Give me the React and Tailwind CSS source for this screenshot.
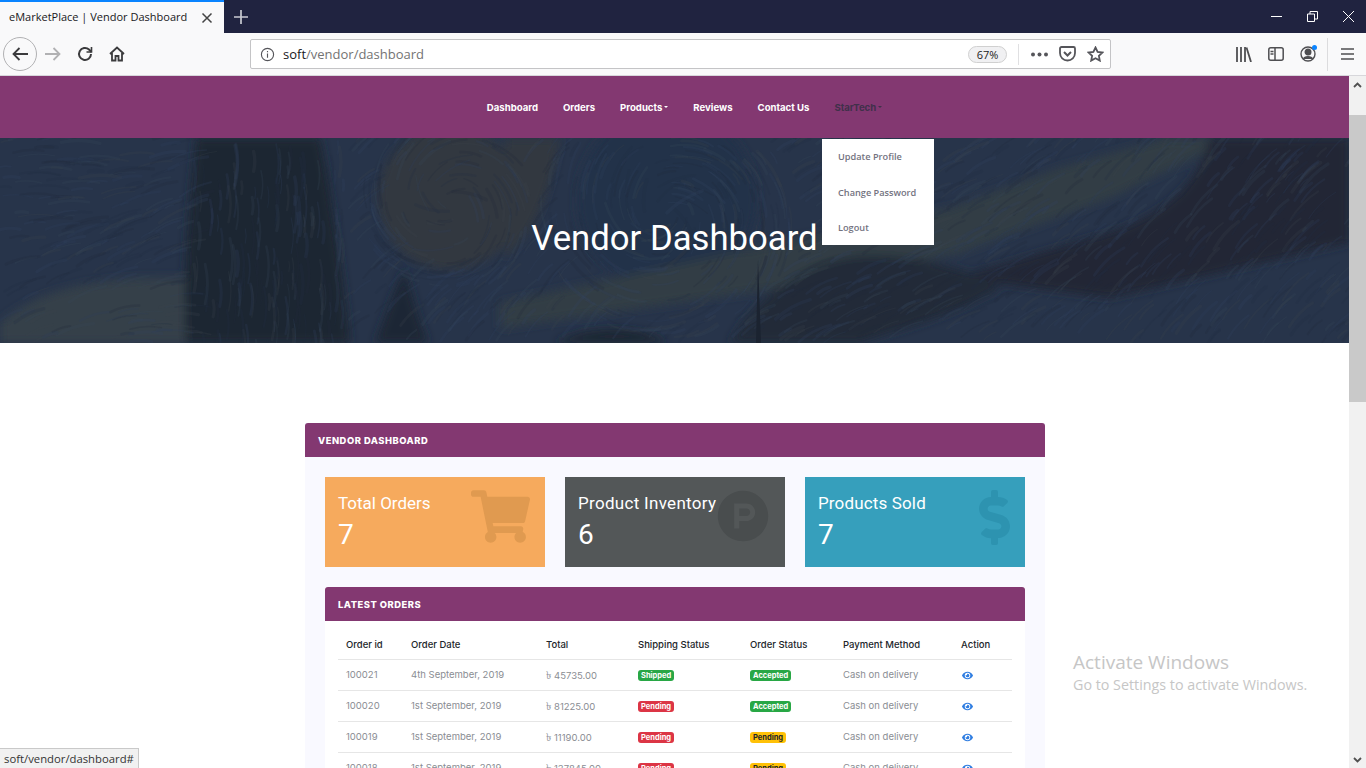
import { FaEye, FaShoppingCart, FaProductHunt, FaDollarSign } from 'react-icons/fa';

/** Vendor dashboard page inside a Firefox window, as in the screenshot. */

const orders = [
  { id: '100021', date: '4th September, 2019', total: '45735.00', ship: 'Shipped', status: 'Accepted' },
  { id: '100020', date: '1st September, 2019', total: '81225.00', ship: 'Pending', status: 'Accepted' },
  { id: '100019', date: '1st September, 2019', total: '11190.00', ship: 'Pending', status: 'Pending' },
  { id: '100018', date: '1st September, 2019', total: '137845.00', ship: 'Pending', status: 'Pending' },
];

// which way the paint runs at a point of the hero
function strokeAngle(x, y) {
  const swirl = (cx, cy, radius) => {
    const dist = Math.hypot(x - cx, y - cy);
    return dist < radius ? Math.atan2(y - cy, x - cx) + Math.PI / 2 : null;
  };
  const around = swirl(450, 65, 85) ?? swirl(667, 75, 125);
  if (around !== null) return around;
  if (x >= 190 && x < 345) return Math.PI / 2;
  if (x < 190) return -0.2 + Math.sin(x / 60 + y / 40) * 0.25;
  return -0.65 + Math.sin(x / 110) * 0.2;
}

// brush strokes for the painting behind the hero
function makeStrokes() {
  const colours = ['#31435f', '#212d42', '#364559', '#3a444b', '#202a3a', '#2d3d5a'];
  const out = [];
  let seed = 11;
  const rnd = () => {
    seed = (seed * 16807) % 2147483647;
    return seed / 2147483647;
  };
  for (let i = 0; i < 1500; i++) {
    const x = rnd() * 1349;
    const y = rnd() * 205;
    const len = 10 + rnd() * 32;
    const a = strokeAngle(x, y);
    const dx = Math.cos(a) * len;
    const dy = Math.sin(a) * len;
    out.push({
      d: `M${x.toFixed(1)} ${y.toFixed(1)}q${(dx / 2 + dy * 0.12).toFixed(1)} ${(dy / 2 - dx * 0.12).toFixed(1)} ${dx.toFixed(1)} ${dy.toFixed(1)}`,
      c: colours[Math.floor(rnd() * colours.length)],
      w: 1 + rnd() * 2.5,
    });
  }
  return out;
}

const strokes = makeStrokes();

function HeroPainting() {
  return (
    <svg className="absolute inset-0 w-full h-full" viewBox="0 0 1349 205" preserveAspectRatio="none">
      <defs>
        <filter id="soft" x="-10%" y="-10%" width="120%" height="120%">
          <feGaussianBlur stdDeviation="5" />
        </filter>
      </defs>
      <rect width="1349" height="205" fill="#27344a" />
      <g filter="url(#soft)">
        {/* greenish patch bottom left */}
        <path d="M0 205V185C40 150 100 138 185 140L190 205Z" fill="#353f48" />
        {/* moon */}
        <circle cx="450" cy="60" r="72" fill="#33383f" />
        <path d="M505 0H560C550 50 540 90 505 120Z" fill="#33383f" />
        {/* cypress trees */}
        <path d="M196 0H320C332 60 342 130 350 205H186C182 130 190 60 196 0Z" fill="#1e2632" />
        <path d="M375 205C385 180 395 150 405 130C412 160 420 185 428 205Z" fill="#1f2734" />
        {/* swirl */}
        <circle cx="667" cy="62" r="90" fill="#24314a" />
        {/* pale band rising to the right */}
        <path d="M500 165L778 105L950 70L1060 30L1167 0H1235L1110 60L960 115L780 150L500 190Z" fill="#333c44" />
        {/* dark hill and rocks */}
        <path d="M1210 0H1349V105L1110 160L955 140L1090 100C1170 80 1200 40 1210 0Z" fill="#202836" />
        <path d="M730 205C760 150 820 115 880 118C930 120 980 135 1000 150C950 180 900 190 860 205Z" fill="#202938" />
        <path d="M555 205C580 190 640 185 667 205Z" fill="#1e2633" />
      </g>
      {strokes.map((s, i) => (
        <path key={i} d={s.d} stroke={s.c} strokeWidth={s.w} fill="none" opacity="0.24" strokeLinecap="round" />
      ))}
      <path d="M758 122L756 205H761Z" fill="#1b2330" />
    </svg>
  );
}

function Badge({ label, warn }) {
  let colour = 'bg-[#28a745] text-white';
  if (label === 'Pending') colour = warn ? 'bg-[#ffc107] text-[#212529]' : 'bg-[#dc3545] text-white';
  return (
    <span className={`inline-block px-[3px] rounded-[3px] text-[7.5px] leading-[11px] font-bold ${colour}`}>
      {label}
    </span>
  );
}

function StatCard({ title, value, bg, icon, titleClass }) {
  return (
    <div className={`relative w-[220px] h-[90px] px-[13px] pt-[14px] text-white ${bg}`}>
      <div className="absolute right-[15px] top-[13px]">{icon}</div>
      <div className={`relative text-[17px] leading-[24px] ${titleClass}`}>{title}</div>
      <div className="relative text-[28px] leading-[38px] mt-[1px]">{value}</div>
    </div>
  );
}

function OrdersTable() {
  return (
    <table className="w-[674px] mx-[13px] table-fixed text-[9.5px] text-[#8a8d93]">
      <thead>
        <tr className="h-[38px] border-b border-[#e6e6e6] text-[#212529] text-left">
          <th className="w-[65px] pl-2 pt-[10px] font-medium">Order id</th>
          <th className="w-[135px] pl-2 pt-[10px] font-medium">Order Date</th>
          <th className="w-[92px] pl-2 pt-[10px] font-medium">Total</th>
          <th className="w-[112px] pl-2 pt-[10px] font-medium">Shipping Status</th>
          <th className="w-[93px] pl-2 pt-[10px] font-medium">Order Status</th>
          <th className="w-[118px] pl-2 pt-[10px] font-medium">Payment Method</th>
          <th className="w-[59px] pl-2 pt-[10px] font-medium">Action</th>
        </tr>
      </thead>
      <tbody>
        {orders.map((o) => (
          <tr key={o.id} className="h-[31px] border-b border-[#e6e6e6]">
            <td className="pl-2 pt-[2px]">{o.id}</td>
            <td className="pl-2 pt-[2px]">{o.date}</td>
            <td className="pl-2 pt-[2px]"><span className="text-[11px] mr-[3px]">৳</span>{o.total}</td>
            <td className="pl-2 pt-[2px]"><Badge label={o.ship} /></td>
            <td className="pl-2 pt-[2px]"><Badge label={o.status} warn /></td>
            <td className="pl-2 pt-[2px]">Cash on delivery</td>
            <td className="pl-2 pt-[2px]"><FaEye size={11} className="ml-[1px] text-[#2f7de1]" /></td>
          </tr>
        ))}
      </tbody>
    </table>
  );
}

function BrowserChrome() {
  return (
    <div className="shrink-0" style={{ fontFamily: '"Open Sans", sans-serif' }}>
      {/* tab strip */}
      <div className="h-[33px] bg-[#202340] flex items-stretch">
        <div className="w-[224px] bg-[#f9f9fa] border-t-2 border-[#0a84ff] flex items-center pl-[9px] pr-[11px] justify-between">
          <span className="text-[11px] text-[#18181a] whitespace-nowrap">eMarketPlace | Vendor Dashboard</span>
          <svg width="12" height="12" viewBox="0 0 12 12" stroke="#444" strokeWidth="1.5"><path d="M1.5 1.5l9 9M10.5 1.5l-9 9" /></svg>
        </div>
        <div className="w-[34px] flex items-center justify-center">
          <svg width="14" height="14" viewBox="0 0 14 14" stroke="#c9cad2" strokeWidth="1.7"><path d="M7 0v14M0 7h14" /></svg>
        </div>
        <div className="flex-1" />
        <div className="flex items-center gap-[25px] pr-[12px]">
          <svg width="11" height="11" viewBox="0 0 11 11" stroke="#fff" strokeWidth="1"><path d="M0 5.5h11" /></svg>
          <svg width="11" height="11" viewBox="0 0 11 11" stroke="#fff" strokeWidth="1" fill="none"><path d="M.5 3h7v7.500h-7zM3 3V.5h7.500V8H8" /></svg>
          <svg width="11" height="11" viewBox="0 0 11 11" stroke="#fff" strokeWidth="1"><path d="M0 0l11 11M11 0L0 11" /></svg>
        </div>
      </div>
      {/* toolbar */}
      <div className="h-[43px] bg-[#f9f9fa] border-b border-[#d7d7db] flex items-center">
        <div className="w-[250px] flex items-center pl-[3px]">
          <div className="w-[34px] h-[34px] rounded-full border border-[#b1b1b3] flex items-center justify-center">
            <svg width="16" height="14" viewBox="0 0 16 14" fill="none" stroke="#3b3b3d" strokeWidth="1.8"><path d="M16 7H1.500M7.500 1L1.500 7l6 6" /></svg>
          </div>
          <svg className="ml-[8px]" width="16" height="14" viewBox="0 0 16 14" fill="none" stroke="#b1b1b3" strokeWidth="1.8"><path d="M0 7h14.500M8.500 1l6 6-6 6" /></svg>
          <svg className="ml-[16px]" width="16" height="16" viewBox="0 0 16 16" fill="none" stroke="#3b3b3d" strokeWidth="2"><path d="M14 8a6 6 0 1 1-2-4.500L14.500 6" /><path d="M14.500 1v5h-5" strokeWidth="1.6" /></svg>
          <svg className="ml-[16px]" width="16" height="16" viewBox="0 0 16 16" fill="none" stroke="#3b3b3d" strokeWidth="1.8"><path d="M1 8l7-6.500L15 8M3 7v7.500h3.500V10h3v4.500H13V7" /></svg>
        </div>
        <div className="w-[861px] h-[30px] bg-white border border-[#c4c4c6] rounded-[2px] flex items-center pl-[9px] pr-[6px]">
          <svg width="15" height="15" viewBox="0 0 16 16" fill="none" stroke="#55555a" strokeWidth="1.2"><circle cx="8" cy="8" r="6.5" /><path d="M8 7v4.500M8 4.300v1.300" /></svg>
          <span className="ml-[8px] mt-[1px] text-[13px] text-[#737373]"><span className="text-[#18181a]">soft</span>/vendor/dashboard</span>
          <div className="flex-1" />
          <span className="w-[39px] h-[17px] rounded-full border border-[#d0d0d0] bg-[#f0f0f2] text-[11px] leading-[15px] text-center text-[#222] mr-[11px]">67%</span>
          <div className="w-px h-[21px] bg-[#e0e0e2] mr-[12px]" />
          <svg width="17" height="5" viewBox="0 0 17 5" fill="#55555a"><circle cx="2" cy="2.5" r="2" /><circle cx="8.5" cy="2.5" r="2" /><circle cx="15" cy="2.5" r="2" /></svg>
          <svg className="ml-[11px]" width="17" height="16" viewBox="0 0 17 16" fill="none" stroke="#55555a" strokeWidth="1.8"><path d="M1 2.500A1.500 1.500 0 0 1 2.500 1h12A1.500 1.500 0 0 1 16 2.500V7A7.500 7.500 0 0 1 1 7Z" /><path d="M5 6l3.500 3.500L12 6" strokeWidth="2" /></svg>
          <svg className="ml-[11px]" width="17" height="16" viewBox="0 0 17 16" fill="none" stroke="#55555a" strokeWidth="1.8"><path d="M8.500 1.500l2.100 4.400 4.900.6-3.600 3.300.9 4.800-4.300-2.400-4.300 2.400.9-4.800-3.600-3.300 4.900-.6Z" /></svg>
        </div>
        <div className="flex-1 flex items-center pl-[125px]">
          <svg width="16" height="15" viewBox="0 0 16 15" fill="none" stroke="#4f4f52" strokeWidth="1.8"><path d="M1 0v15M5 0v15M9 0v15M10.500 .5L15 15" /></svg>
          <svg className="ml-[16px]" width="16" height="14" viewBox="0 0 16 14" fill="none" stroke="#4f4f52" strokeWidth="1.5"><rect x=".8" y=".8" width="14.4" height="12.4" rx="2" /><path d="M7 1v12M2.500 4.500h3M2.500 7h3" /></svg>
          <div className="ml-[16px] relative w-[16px] h-[16px]">
            <svg width="16" height="16" viewBox="0 0 16 16" fill="none" stroke="#4f4f52" strokeWidth="1.4"><circle cx="8" cy="8" r="7" /><circle cx="8" cy="6" r="2.8" fill="#4f4f52" /><path d="M3.500 13c1-3 8-3 9 0" fill="#4f4f52" /></svg>
            <span className="absolute -top-[1px] -right-[1px] w-[5px] h-[5px] rounded-full bg-[#0a84ff]" />
          </div>
          <div className="w-px h-[33px] bg-[#dcdcde] ml-[11px]" />
          <svg className="ml-[13px]" width="13" height="12" viewBox="0 0 13 12" stroke="#4f4f52" strokeWidth="1.7"><path d="M0 1h13M0 6h13M0 11h13" /></svg>
        </div>
      </div>
    </div>
  );
}

function Caret({ colour }) {
  return <span className={`inline-block ml-[2px] mb-[3px] w-0 h-0 border-x-[2px] border-x-transparent border-t-[2px] ${colour}`} />;
}

function NavBar() {
  const links = ['Dashboard', 'Orders', 'Products', 'Reviews', 'Contact Us'];
  return (
    <nav className="relative h-[62px] bg-[#833871] flex justify-center pt-[25px] pl-[20px]">
      <div className="flex gap-[25px] text-[9.6px] leading-[13px] font-bold text-white">
        {links.map((l) => (
          <span key={l}>
            {l}
            {l === 'Products' && <Caret colour="border-t-white" />}
          </span>
        ))}
        <span className="text-[#40304a]">
          StarTech
          <Caret colour="border-t-[#40304a]" />
        </span>
      </div>
      {/* account dropdown, open */}
      <div
        className="absolute left-[822px] top-[63px] z-10 w-[112px] h-[106px] bg-white pl-[16px] pt-[11px] text-[9.2px] font-semibold text-[#73737f] flex flex-col gap-[21.5px] leading-[14px]"
        style={{ fontFamily: '"Open Sans", sans-serif' }}
      >
        <span>Update Profile</span>
        <span>Change Password</span>
        <span>Logout</span>
      </div>
    </nav>
  );
}

function Scrollbar() {
  return (
    <div className="w-[17px] shrink-0 bg-[#f1f1f1] flex flex-col items-center">
      <div className="h-[17px] flex items-center justify-center">
        <svg width="9" height="6" viewBox="0 0 9 6" fill="none" stroke="#505050" strokeWidth="1.8"><path d="M1 5l3.500-3.500L8 5" /></svg>
      </div>
      <div className="w-full h-[287px] mt-[22px] bg-[#c9c9c9]" />
      <div className="flex-1" />
      <div className="h-[17px] flex items-center justify-center">
        <svg width="9" height="6" viewBox="0 0 9 6" fill="none" stroke="#505050" strokeWidth="1.8"><path d="M1 1l3.500 3.500L8 1" /></svg>
      </div>
    </div>
  );
}

export default function App() {
  return (
    <div className="relative h-screen w-full overflow-hidden flex flex-col bg-white">
      <BrowserChrome />

      <div className="flex-1 min-h-0 flex">
        <main className="flex-1 min-w-0 overflow-hidden" style={{ fontFamily: 'Inter, Roboto, sans-serif' }}>
          <NavBar />

          <section className="relative h-[205px] flex items-center justify-center pb-[5px] overflow-hidden">
            <HeroPainting />
            <h1 className="relative text-[34.7px] text-white" style={{ fontFamily: 'Roboto, sans-serif' }}>Vendor Dashboard</h1>
          </section>

          <div className="w-[740px] mt-[80px] ml-[305px] bg-[#f9f9ff]">
            <div className="h-[34px] bg-[#833871] rounded-t-[3px] flex items-center pl-[13px] pt-[2px] text-[9.4px] font-extrabold tracking-[0.5px] text-white">
              VENDOR DASHBOARD
            </div>
            <div className="p-5">
              <div className="flex gap-5" style={{ fontFamily: 'Roboto, sans-serif' }}>
                <StatCard title="Total Orders" value="7" bg="bg-[#f6aa5d]" titleClass="" icon={<FaShoppingCart size={59} className="text-[#e09a50] -mt-[3px]" />} />
                <StatCard title="Product Inventory" value="6" bg="bg-[#535758]" titleClass="tracking-[0.3px]" icon={<FaProductHunt size={52} className="text-[#494d4e] mr-[1px]" />} />
                <StatCard title="Products Sold" value="7" bg="bg-[#369fbc]" titleClass="tracking-[0.15px]" icon={<FaDollarSign size={55} className="text-[#2d93b0] -mr-[12px]" />} />
              </div>
              <div className="mt-5 bg-white">
                <div className="h-[34px] bg-[#833871] rounded-t-[3px] flex items-center pl-[13px] pt-[2px] text-[9.4px] font-extrabold tracking-[0.5px] text-white">
                  LATEST ORDERS
                </div>
                <OrdersTable />
              </div>
            </div>
          </div>
        </main>
        <Scrollbar />
      </div>

      {/* status tooltip, bottom left */}
      <div
        className="absolute left-0 bottom-0 h-[20px] px-[4px] bg-[#f1f1f1] border-t border-r border-[#c9c9c9] text-[11.3px] leading-[19px] text-[#333]"
        style={{ fontFamily: '"Open Sans", sans-serif' }}
      >
        soft/vendor/dashboard#
      </div>

      {/* windows watermark */}
      <div className="absolute left-[1073px] top-[650px] text-[#c6c6c6] pointer-events-none" style={{ fontFamily: '"Open Sans", sans-serif' }}>
        <div className="text-[19px] leading-[24px]">Activate Windows</div>
        <div className="text-[14.3px] leading-[22px]">Go to Settings to activate Windows.</div>
      </div>
    </div>
  );
}
